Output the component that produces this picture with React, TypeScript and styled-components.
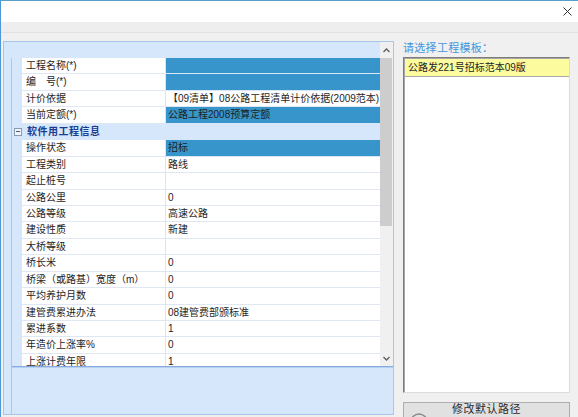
import React from "react";
import styled, { createGlobalStyle } from "styled-components";

const GlobalStyle = createGlobalStyle`
  html, body {
    margin: 0;
    padding: 0;
    overflow: hidden;
    background: #f0f0f0;
  }
  * { box-sizing: border-box; }
  body {
    font-family: "Liberation Sans", "Noto Sans CJK SC", sans-serif;
  }
`;

interface PropRow {
  label: string;
  value?: string;
  highlight?: boolean;
  section?: boolean;
}

const rows: PropRow[] = [
  { label: "工程名称(*)", value: "", highlight: true },
  { label: "编\u3000号(*)", value: "", highlight: true },
  { label: "计价依据", value: "【09清单】08公路工程清单计价依据(2009范本)" },
  { label: "当前定额(*)", value: "公路工程2008预算定额", highlight: true },
  { label: "软件用工程信息", section: true },
  { label: "操作状态", value: "招标", highlight: true },
  { label: "工程类别", value: "路线" },
  { label: "起止桩号", value: "" },
  { label: "公路公里", value: "0" },
  { label: "公路等级", value: "高速公路" },
  { label: "建设性质", value: "新建" },
  { label: "大桥等级", value: "" },
  { label: "桥长米", value: "0" },
  { label: "桥梁（或路基）宽度（m）", value: "0" },
  { label: "平均养护月数", value: "0" },
  { label: "建管费累进办法", value: "08建管费部颁标准" },
  { label: "累进系数", value: "1" },
  { label: "年造价上涨率%", value: "0" },
  { label: "上涨计费年限", value: "1" },
];

// window frame
const Window = styled.div`
  width: 578px;
  height: 417px;
  border-top: 1px solid #5a9fcc;
  border-left: 1px solid #4c97d6;
  background: #f0f0f0;
  display: flex;
  flex-direction: column;
  overflow: hidden;
`;

const TitleBar = styled.div`
  height: 21px;
  flex-shrink: 0;
  background: #ffffff;
  display: flex;
  justify-content: flex-end;
  align-items: center;
  padding-right: 6px;
`;

const Toolbar = styled.div`
  height: 19px;
  flex-shrink: 0;
  display: flex;
  flex-direction: column;
`;

const ToolbarTop = styled.div`
  height: 11px;
  background: #eeeeee;
  border-bottom: 1px solid #e2e2e2;
`;

const Content = styled.div`
  flex: 1;
  display: flex;
  gap: 9px;
  padding-left: 2px;
  overflow: hidden;
`;

// left property panel
const LeftPane = styled.div`
  width: 391px;
  height: 374px;
  flex-shrink: 0;
  display: flex;
  border: 1px solid #a9c5ea;
  background: #d6e6fb;
`;

const Gutter = styled.div`
  width: 8px;
  padding-top: 16px;
  display: flex;
`;

const GutterLine = styled.div`
  flex: 1;
  border-right: 1px solid #b4c6de;
`;

const MainCol = styled.div`
  flex: 1;
  display: flex;
  flex-direction: column;
`;

const GridArea = styled.div`
  height: 324px;
  flex-shrink: 0;
  display: flex;
  overflow: hidden;
`;

const RowsCol = styled.div`
  flex: 1;
  display: flex;
  flex-direction: column;
  overflow: hidden;
`;

const HeaderStrip = styled.div`
  height: 16px;
  flex-shrink: 0;
`;

const Row = styled.div`
  height: 16.45px;
  flex-shrink: 0;
  display: grid;
  grid-template-columns: 10px 144px 1fr;
  font-size: 10px;
  line-height: 16px;
  color: #1e1e1e;
`;

const Indent = styled.div`
  display: flex;
  align-items: center;
  justify-content: center;
  padding-left: 1px;
`;

const LabelCell = styled.div<{ $section?: boolean }>`
  background: ${({ $section }) => ($section ? "transparent" : "#ffffff")};
  border-right: ${({ $section }) => ($section ? "none" : "1px solid #dbe4ef")};
  border-bottom: 1px solid ${({ $section }) => ($section ? "#d6e6fb" : "#dfe8f2")};
  padding-left: ${({ $section }) => ($section ? "5px" : "4px")};
  white-space: nowrap;
  overflow: hidden;
  font-weight: ${({ $section }) => ($section ? 700 : 400)};
  color: ${({ $section }) => ($section ? "#1b3c8f" : "#1e1e1e")};
  letter-spacing: ${({ $section }) => ($section ? "0.5px" : "0")};
`;

const ValueCell = styled.div<{ $highlight?: boolean; $section?: boolean }>`
  background: ${({ $highlight, $section }) =>
    $section ? "transparent" : $highlight ? "#3795cb" : "#ffffff"};
  border-bottom: 1px solid ${({ $highlight, $section }) =>
    $section ? "#d6e6fb" : $highlight ? "#d7e6f3" : "#dfe8f2"};
  padding-left: 2px;
  white-space: nowrap;
  overflow: hidden;
`;

const ExpandBox = styled.div`
  width: 8px;
  height: 8px;
  border: 1px solid #8c9bb2;
  background: #eef4fc;
  display: flex;
  align-items: center;
  justify-content: center;

  &::after {
    content: "";
    width: 4px;
    height: 1px;
    background: #4a5a72;
  }
`;

const Scrollbar = styled.div`
  width: 13px;
  background: #f0f0f0;
  display: flex;
  flex-direction: column;
`;

const ScrollButton = styled.div`
  height: 16px;
  display: flex;
  align-items: center;
  justify-content: center;
  flex-shrink: 0;
`;

const ScrollTrack = styled.div`
  flex: 1;
  display: flex;
  flex-direction: column;
`;

const ScrollThumb = styled.div`
  height: 168px;
  width: 12px;
  background: #cdcdcd;
`;

const DescPanel = styled.div`
  flex: 1;
  border-top: 1px solid #86abdc;
  box-shadow: inset 0 1px 0 #b7cff0;
  background: #d6e6fb;
`;

// right template panel
const RightPane = styled.div`
  width: 167px;
  flex-shrink: 0;
  display: flex;
  flex-direction: column;
`;

const PaneLabel = styled.div`
  height: 16px;
  flex-shrink: 0;
  font-size: 11px;
  line-height: 15px;
  color: #4594dc;
  letter-spacing: 0.3px;
`;

const ListBox = styled.div`
  height: 336px;
  flex-shrink: 0;
  background: #ffffff;
  border: 1px solid;
  border-color: #7d7d7d #dcdcdc #dcdcdc #7d7d7d;
  box-shadow: inset 1px 1px 0 #a6a6a6;
  padding: 1px 0 0 1px;
`;

const ListItem = styled.div<{ $selected?: boolean }>`
  height: 18px;
  font-size: 10px;
  line-height: 17px;
  padding-left: 3px;
  color: #1e1e1e;
  background: ${({ $selected }) => ($selected ? "#fcfc9e" : "transparent")};
  border-bottom: 1px solid ${({ $selected }) => ($selected ? "#a8a8a8" : "transparent")};
`;

const PathButton = styled.div`
  margin-top: 9px;
  height: 40px;
  flex-shrink: 0;
  background: #e1e1e1;
  border: 1px solid #adadad;
  display: flex;
  flex-direction: column;
  align-items: center;
`;

const ButtonText = styled.div`
  font-size: 11px;
  line-height: 13px;
  color: #2a2a2a;
  letter-spacing: 0.5px;
`;

const ButtonIcon = styled.svg`
  align-self: flex-start;
  margin-left: 5px;
  margin-top: -4px;
`;

const Chevron: React.FC<{ down?: boolean }> = ({ down }) => (
  <svg width="7" height="5" viewBox="0 0 7 5">
    <polyline
      points={down ? "0.5,1 3.5,4 6.5,1" : "0.5,4 3.5,1 6.5,4"}
      fill="none"
      stroke="#5e5e5e"
      strokeWidth="1.3"
    />
  </svg>
);

const App: React.FC = () => {
  return (
    <>
      <GlobalStyle />
      <Window>
        <TitleBar>
          <svg width="9" height="9" viewBox="0 0 9 9">
            <path d="M0.5 0.5 L8.5 8.5 M8.5 0.5 L0.5 8.5" stroke="#333" strokeWidth="1" />
          </svg>
        </TitleBar>
        <Toolbar>
          <ToolbarTop />
        </Toolbar>
        <Content>
          <LeftPane>
            <Gutter>
              <GutterLine />
            </Gutter>
            <MainCol>
              <GridArea>
                <RowsCol>
                  <HeaderStrip />
                  {rows.map((r) => (
                    <Row key={r.label}>
                      <Indent>{r.section && <ExpandBox />}</Indent>
                      <LabelCell $section={r.section}>{r.label}</LabelCell>
                      <ValueCell $highlight={r.highlight} $section={r.section}>
                        {r.value}
                      </ValueCell>
                    </Row>
                  ))}
                </RowsCol>
                <Scrollbar>
                  <ScrollButton>
                    <Chevron />
                  </ScrollButton>
                  <ScrollTrack>
                    <ScrollThumb />
                  </ScrollTrack>
                  <ScrollButton>
                    <Chevron down />
                  </ScrollButton>
                </Scrollbar>
              </GridArea>
              <DescPanel />
            </MainCol>
          </LeftPane>
          <RightPane>
            <PaneLabel>请选择工程模板：</PaneLabel>
            <ListBox>
              <ListItem $selected>公路发221号招标范本09版</ListItem>
            </ListBox>
            <PathButton>
              <ButtonText>修改默认路径</ButtonText>
              <ButtonIcon width="20" height="20" viewBox="0 0 20 20">
                <circle cx="10" cy="10" r="8" fill="none" stroke="#8a8a8a" strokeWidth="1.5" />
              </ButtonIcon>
            </PathButton>
          </RightPane>
        </Content>
      </Window>
    </>
  );
};

export default App;
